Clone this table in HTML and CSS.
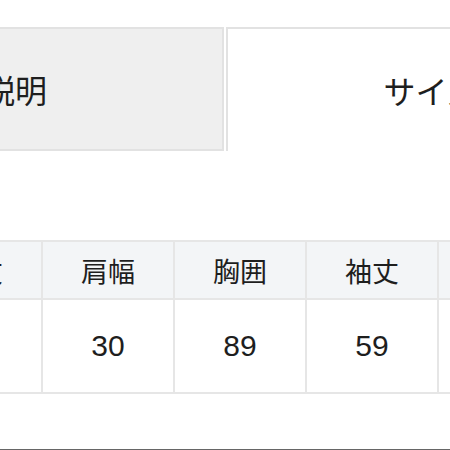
FILE: index.html
```html
<!DOCTYPE html>
<html lang="ja">
<head>
<meta charset="utf-8">
<link rel="stylesheet" href="styles.css">
</head>
<body>
<div class="page">
  <div class="tabs">
    <div class="tab tab-inactive">説明</div>
    <div class="tab tab-active">サイズ</div>
  </div>
  <table class="size-table">
    <thead>
      <tr><th>着丈</th><th>肩幅</th><th>胸囲</th><th>袖丈</th><th>裄丈</th></tr>
    </thead>
    <tbody>
      <tr><td>60</td><td>30</td><td>89</td><td>59</td><td>74</td></tr>
    </tbody>
  </table>
  <div class="bottom-line"></div>
</div>
</body>
</html>
```

FILE: styles.css
```css
html, body {
  margin: 0;
  padding: 0;
  background: #fff;
}
body {
  width: 450px;
  height: 450px;
  overflow: hidden;
  font-family: "Liberation Sans", "Noto Sans CJK JP", sans-serif;
  color: #222;
}
.page {
  position: relative;
  width: 450px;
  height: 450px;
  overflow: hidden;
  padding-top: 27px;
  box-sizing: border-box;
}
.tabs {
  display: flex;
  margin-left: -194px;
  width: 840px;
}
.tab {
  width: 418px;
  flex: none;
  height: 124px;
  box-sizing: border-box;
  display: flex;
  align-items: center;
  justify-content: center;
  font-size: 32px;
  font-family: "Noto Sans CJK JP", sans-serif;
  color: #1e1e1e;
}
.tab-inactive {
  background: #efefef;
  border: 2px solid #e2e2e2;
}
.tab-active {
  background: #fff;
  border-top: 2px solid #e2e2e2;
  border-left: 2px solid #e2e2e2;
  margin-left: 2px;
  padding-right: 10px;
}
.size-table {
  margin-top: 89px;
  margin-left: -91px;
  width: 662px;
  border-collapse: collapse;
  table-layout: fixed;
}
.size-table th,
.size-table td {
  width: 130px;
  border: 2px solid #e6e6e6;
  text-align: center;
  padding: 0;
  color: #1e1e1e;
}
.size-table th {
  height: 56px;
  background: #f3f5f7;
  font-weight: normal;
  font-size: 27px;
  font-family: "Noto Sans CJK JP", sans-serif;
}
.size-table td {
  height: 92px;
  background: #fff;
  font-size: 30px;
}
.bottom-line {
  position: absolute;
  left: 0;
  right: 0;
  bottom: 0;
  height: 1px;
  background: #666;
}
```
